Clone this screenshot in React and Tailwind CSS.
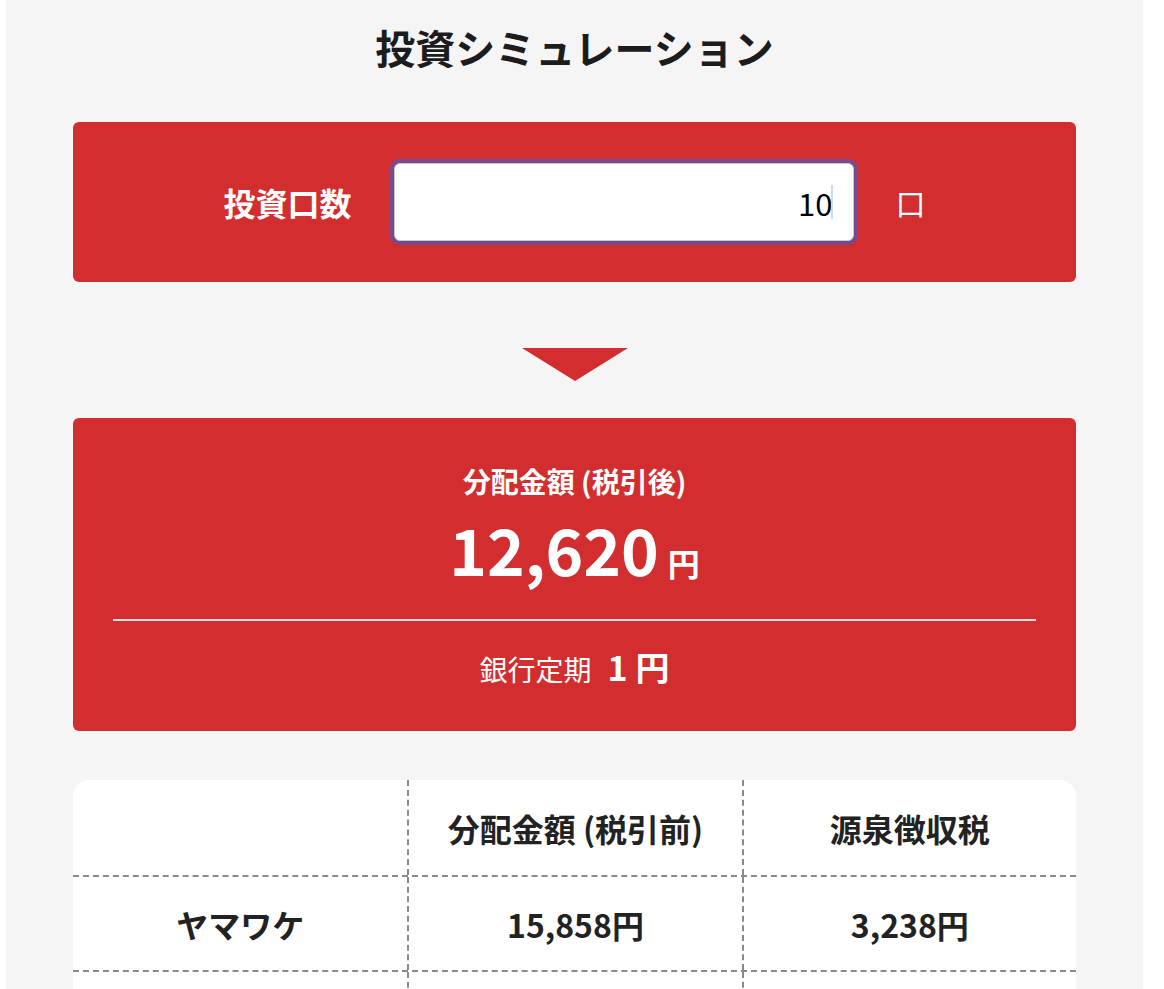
const rows = [
  { name: "ヤマワケ", before: "15,858円", tax: "3,238円" },
  { name: "", before: "", tax: "" },
];

const App = () => {
  return (
    <div
      className="min-h-screen bg-white"
      style={{ fontFamily: '"Noto Sans CJK JP", "Noto Sans", sans-serif' }}
    >
      <div className="ml-[6px] w-[1137px] bg-[#f5f5f5] px-[67px] pb-10 min-h-screen">
        <div className="h-[94px] flex items-center justify-center text-[40px] font-bold text-[#1c1c1c] leading-none">
          投資シミュレーション
        </div>

        <div className="mt-[28px] h-[160px] bg-[#d32e2f] rounded-md flex items-center justify-center gap-[42px]">
          <div className="text-white text-[32px] font-bold">投資口数</div>
          <div className="w-[460px] h-[78px] bg-white rounded-md border border-[#c8c8c8] ring-4 ring-[#774a8d] flex items-center justify-end pr-[20px]">
            <span className="text-[31px] text-black leading-none">10</span>
            <span className="-ml-[2px] w-[2px] h-[34px] bg-[#c9dbf7]" />
          </div>
          <div className="text-white text-[30px]">口</div>
        </div>

        <div className="mt-[66px] mb-[37px] flex justify-center">
          <div className="w-0 h-0 border-l-[53px] border-r-[53px] border-t-[33px] border-l-transparent border-r-transparent border-t-[#d32e2f]" />
        </div>

        <div className="h-[313px] bg-[#d32e2f] rounded-md flex flex-col items-center text-white">
          <div className="mt-[47px] text-[28px] font-bold leading-[32px]">
            分配金額 (税引後)
          </div>
          <div className="mt-[15px] h-[72px] flex items-baseline leading-[72px]">
            <span className="text-[64px] font-bold">12,620</span>
            <span className="ml-[9px] text-[32px] font-bold">円</span>
          </div>
          <div className="mt-[35px] w-[923px] h-[2px] bg-white/85" />
          <div className="mt-[29px] flex items-baseline leading-[34px]">
            <span className="text-[28px]">銀行定期</span>
            <span className="ml-[16px] text-[34px] font-bold">1 円</span>
          </div>
        </div>

        <div className="mt-[49px] bg-white rounded-t-2xl text-[#222] font-bold text-[32px]">
          <div className="grid grid-cols-3 h-[97px] border-b-2 border-dashed border-[#8a8a8a]">
            <div />
            <div className="flex items-center justify-center border-l-2 border-dashed border-[#8a8a8a]">
              分配金額 (税引前)
            </div>
            <div className="flex items-center justify-center border-l-2 border-dashed border-[#8a8a8a]">
              源泉徴収税
            </div>
          </div>
          {rows.map((row, index) => (
            <div
              key={index}
              className="grid grid-cols-3 h-[95px] border-b-2 border-dashed border-[#8a8a8a]"
            >
              <div className="flex items-center justify-center">{row.name}</div>
              <div className="flex items-center justify-center border-l-2 border-dashed border-[#8a8a8a]">
                {row.before}
              </div>
              <div className="flex items-center justify-center border-l-2 border-dashed border-[#8a8a8a]">
                {row.tax}
              </div>
            </div>
          ))}
        </div>
      </div>
    </div>
  );
};

export default App;
